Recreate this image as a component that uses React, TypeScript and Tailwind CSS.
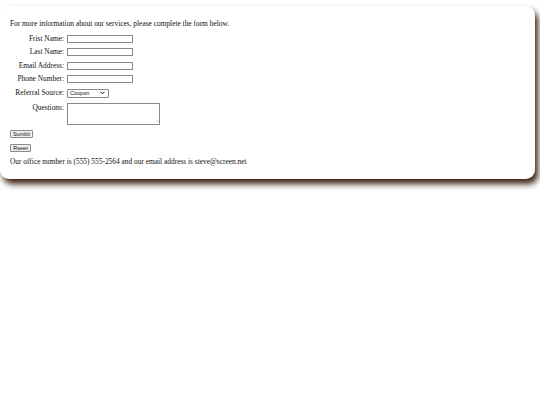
import React from "react";

const serif = { fontFamily: '"Liberation Serif", "DejaVu Serif", serif' };

function Row({ label, children, top }: { label: string; children: React.ReactNode; top?: boolean }) {
  return (
    <div className={`flex ${top ? "items-start" : "items-center"} gap-[3px]`}>
      <div className={`w-[54px] text-right text-[7.4px] leading-[8px] whitespace-nowrap text-[#111] ${top ? "pt-[1px]" : ""}`}>{label}</div>
      {children}
    </div>
  );
}

export default function App() {
  const inputCls = "w-[66px] h-[8px] border border-[#8a8a8a] bg-white rounded-none outline-none p-0";
  return (
    <div className="w-[540px] h-[405px] bg-white overflow-hidden pt-[6px]" style={serif}>
      <div className="w-[535px] h-[173px] bg-white rounded-[9px] shadow-[3px_5px_6px_#3b2010] pt-[14px] pl-[10px] text-[#111]">
        <p className="text-[7.4px] leading-[8px] h-[8px] whitespace-nowrap">
          For more information about our services, please complete the form below.
        </p>
        <div className="mt-[7px] flex flex-col gap-[5.4px]">
          <Row label="Frist Name:"><input className={inputCls} /></Row>
          <Row label="Last Name:"><input className={inputCls} /></Row>
          <Row label="Email Address:"><input className={inputCls} /></Row>
          <Row label="Phone Number:"><input className={inputCls} /></Row>
          <Row label="Referral Source:">
            <div className="w-[42px] h-[9px] border border-[#8a8a8a] rounded-[1px] bg-white flex items-center justify-between px-[2px]" style={{ fontFamily: '"Liberation Sans", Arial, sans-serif' }}>
              <span className="text-[5.5px] leading-[6px]">Coupon</span>
              <svg width="5" height="4" viewBox="0 0 10 8" className="mr-[1px]">
                <path d="M1 1.5 L5 5.5 L9 1.5" fill="none" stroke="#111" strokeWidth="2" />
              </svg>
            </div>
          </Row>
          <Row label="Questions:" top>
            <div className="relative w-[93px] h-[22px] border border-[#8a8a8a] bg-white">
              <svg width="4" height="4" viewBox="0 0 8 8" className="absolute right-[0.5px] bottom-[0.5px]">
                <path d="M7 2 L2 7 M7 5 L5 7" stroke="#999" strokeWidth="1" />
              </svg>
            </div>
          </Row>
        </div>
        <div className="mt-[5px] flex flex-col items-start gap-[6px]" style={{ fontFamily: '"Liberation Sans", Arial, sans-serif' }}>
          <div className="h-[8px] w-[23px] border border-[#8a8a8a] bg-[#efefef] rounded-[1px] flex items-center justify-center text-[5.5px] leading-[6px] text-[#111]">Sumbit</div>
          <div className="h-[8px] w-[21px] border border-[#8a8a8a] bg-[#efefef] rounded-[1px] flex items-center justify-center text-[5.5px] leading-[6px] text-[#111]">Rseet</div>
        </div>
        <p className="mt-[6px] text-[7.4px] leading-[8px] whitespace-nowrap">
          Our office number is (555) 555-2564 and our email address is steve@screen.net
        </p>
      </div>
    </div>
  );
}
